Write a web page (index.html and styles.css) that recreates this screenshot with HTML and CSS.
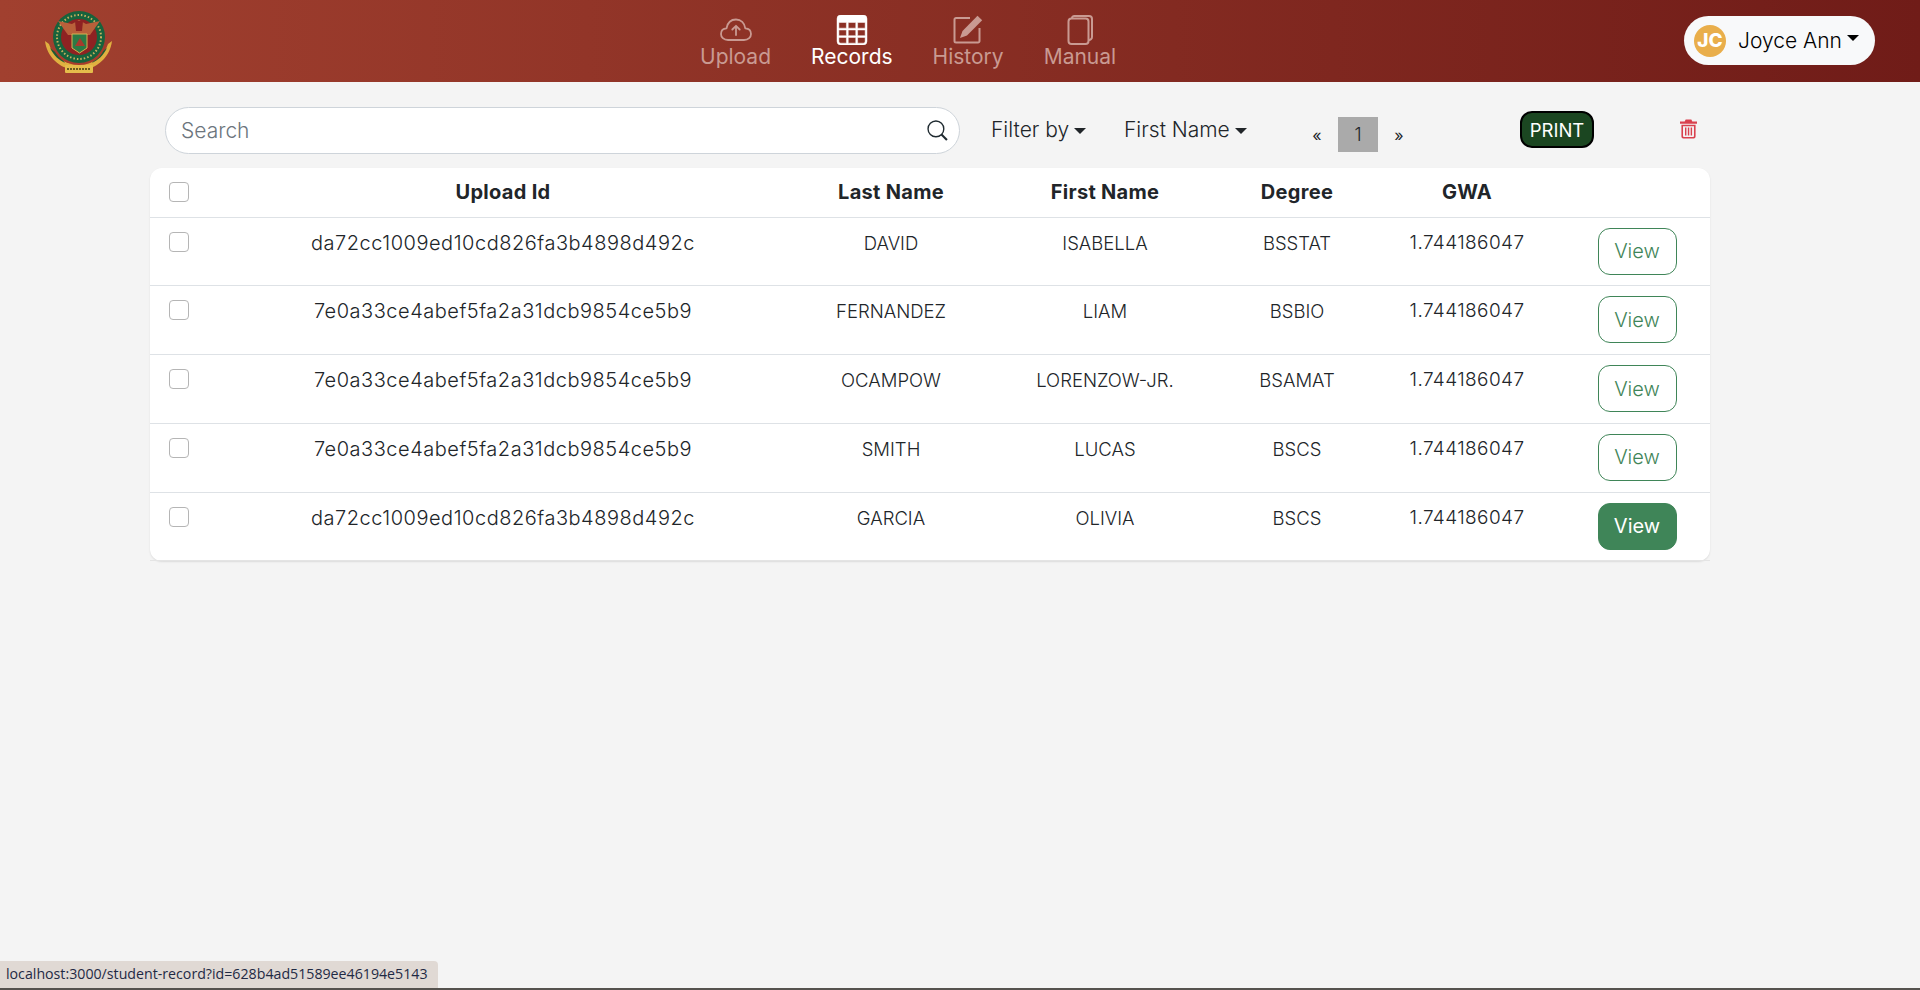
FILE: index.html
```html
<!DOCTYPE html>
<html lang="en">
<head>
  <meta charset="UTF-8" />
  <meta name="viewport" content="width=device-width, initial-scale=1.0" />
  <title>Records</title>
  <link rel="stylesheet" href="styles.css">
</head>
<body>
  <header class="topbar">
    <svg class="crest" viewBox="0 0 67 62">
      <path d="M0 30 C2 46 14 55 22 57 L45 57 C53 55 65 46 67 30 L63 33 C60 43 52 49 44 52 L23 52 C15 49 7 43 4 33 Z" fill="#e0b040"/>
      <path d="M5 37 C9 45 14 49 20 52 L14 44 Z M62 37 C58 45 53 49 47 52 L53 44 Z" fill="#1f5a34"/>
      <path d="M8 34 C10 46 20 54 34 54 C48 54 58 46 60 34 Z" fill="#a63c2c"/>
      <circle cx="34" cy="26" r="26" fill="#17633c"/>
      <circle cx="34" cy="26" r="22" fill="none" stroke="#c8b060" stroke-width="2" stroke-dasharray="1.500 2"/>
      <circle cx="34" cy="26" r="18" fill="#8e2222"/>
      <path d="M13 10 L27 13 L34 9 L41 13 L55 10 L45 24 L23 24 Z" fill="#b9603a"/>
      <path d="M30 10 H38 L37 20 H31 Z" fill="#8e2222"/>
      <path d="M27 23 H42 V37 L34.500 42 L27 37 Z" fill="#2c7a45" stroke="#d8b050"/>
      <path d="M30 35 L35 27 L40 35 Z" fill="#a83a2c"/>
      <rect x="20" y="54" width="28" height="8" rx="1" fill="#e5bc4b"/>
      <path d="M22 58 H46" stroke="#6b5a20" stroke-width="2" stroke-dasharray="2 1"/>
    </svg>
    <nav class="nav">
      <a class="nav-item">
        <svg viewBox="0 0 32 24" fill="none" stroke="currentColor" stroke-width="1.800" stroke-linecap="round" stroke-linejoin="round"><path d="M8 22 C3.500 22 1 19 1 16 C1 12.500 3.500 10.500 6.500 10.300 C7.500 5 11 1.500 16 1.500 C21 1.500 24.500 5 25.300 10.300 C28.500 10.500 31 12.500 31 16 C31 19 28.500 22 24 22 Z"/><path d="M16 17 V8 M12.300 11.500 L16 7.800 L19.700 11.500"/></svg>
        <span>Upload</span>
      </a>
      <a class="nav-item active">
        <svg viewBox="0 0 16 16" fill="currentColor" stroke="currentColor" stroke-width="0.250"><path d="M0 2a2 2 0 0 1 2-2h12a2 2 0 0 1 2 2v12a2 2 0 0 1-2 2H2a2 2 0 0 1-2-2V2zm15 2h-4v3h4V4zm0 4h-4v3h4V8zm0 4h-4v3h3a1 1 0 0 0 1-1v-2zm-5 3v-3H6v3h4zm-5 0v-3H1v2a1 1 0 0 0 1 1h3zm-4-4h4V8H1v3zm0-4h4V4H1v3zm5-3v3h4V4H6zm4 4H6v3h4V8z"/></svg>
        <span>Records</span>
      </a>
      <a class="nav-item">
        <svg viewBox="0 0 30 30" fill="none" stroke="currentColor" stroke-width="2"><path d="M17 3 H3 A1.500 1.500 0 0 0 1.500 4.500 V26 A1.500 1.500 0 0 0 3 27.500 H25 A1.500 1.500 0 0 0 26.500 26 V13"/><path d="M24.500 0.800 L29.200 5.200 L14 20.500 L7 23 L9.500 16 Z" fill="currentColor" stroke="none"/></svg>
        <span>History</span>
      </a>
      <a class="nav-item">
        <svg viewBox="0 0 26 30" fill="none" stroke="currentColor" stroke-width="2"><rect x="1.500" y="3.500" width="20" height="25.500" rx="3"/><path d="M5 3.500 V3 A2.500 2.500 0 0 1 7.500 1 H22 A3 3 0 0 1 25 4 V22 A3 3 0 0 1 21.500 25"/></svg>
        <span>Manual</span>
      </a>
    </nav>
    <div class="user-pill">
      <span class="avatar">JC</span>
      <span class="user-name">Joyce Ann</span>
      <span class="caret"></span>
    </div>
  </header>

  <main class="content">
    <div class="toolbar">
      <div class="search">
        <input type="text" placeholder="Search" />
        <svg viewBox="0 0 20 20" fill="none" stroke="#1f2a30" stroke-width="1.300"><circle cx="8.500" cy="8.500" r="7.500"/><path d="M13.800 13.800 L19 19" stroke-width="2"/></svg>
      </div>
      <div class="filter filter-by">Filter by<span class="caret"></span></div>
      <div class="filter filter-field">First Name<span class="caret"></span></div>
      <div class="pager">
        <span class="pager-arrow">«</span>
        <span class="pager-page">1</span>
        <span class="pager-arrow">»</span>
      </div>
      <button class="print-btn">PRINT</button>
      <svg class="trash" viewBox="0 0 18 20" fill="#d9414e"><path d="M6 0 H12 L13 2 H18 V4.500 H0 V2 H5 Z"/><path d="M1.500 5.500 H16.500 V18 A2 2 0 0 1 14.500 20 H3.500 A2 2 0 0 1 1.500 18 Z M3.200 7 V17.500 A1 1 0 0 0 4.200 18.500 H13.800 A1 1 0 0 0 14.800 17.500 V7 Z M5.300 8.500 H6.800 V17 H5.300 Z M8.300 8.500 H9.800 V17 H8.300 Z M11.300 8.500 H12.800 V17 H11.300 Z" fill-rule="evenodd"/></svg>
    </div>

    <table class="records">
      <colgroup>
        <col class="col-check"><col class="col-id"><col class="col-last"><col class="col-first"><col class="col-degree"><col class="col-gwa"><col class="col-action">
      </colgroup>
      <thead>
        <tr>
          <th><span class="check"></span></th>
          <th>Upload Id</th>
          <th>Last Name</th>
          <th>First Name</th>
          <th>Degree</th>
          <th>GWA</th>
          <th></th>
        </tr>
      </thead>
      <tbody>
        <tr>
          <td><span class="check"></span></td>
          <td class="cell-id">da72cc1009ed10cd826fa3b4898d492c</td>
          <td>DAVID</td>
          <td>ISABELLA</td>
          <td>BSSTAT</td>
          <td class="cell-gwa">1.744186047</td>
          <td><button class="view-btn">View</button></td>
        </tr>
        <tr>
          <td><span class="check"></span></td>
          <td class="cell-id">7e0a33ce4abef5fa2a31dcb9854ce5b9</td>
          <td>FERNANDEZ</td>
          <td>LIAM</td>
          <td>BSBIO</td>
          <td class="cell-gwa">1.744186047</td>
          <td><button class="view-btn">View</button></td>
        </tr>
        <tr>
          <td><span class="check"></span></td>
          <td class="cell-id">7e0a33ce4abef5fa2a31dcb9854ce5b9</td>
          <td>OCAMPOW</td>
          <td>LORENZOW-JR.</td>
          <td>BSAMAT</td>
          <td class="cell-gwa">1.744186047</td>
          <td><button class="view-btn">View</button></td>
        </tr>
        <tr>
          <td><span class="check"></span></td>
          <td class="cell-id">7e0a33ce4abef5fa2a31dcb9854ce5b9</td>
          <td>SMITH</td>
          <td>LUCAS</td>
          <td>BSCS</td>
          <td class="cell-gwa">1.744186047</td>
          <td><button class="view-btn">View</button></td>
        </tr>
        <tr>
          <td><span class="check"></span></td>
          <td class="cell-id">da72cc1009ed10cd826fa3b4898d492c</td>
          <td>GARCIA</td>
          <td>OLIVIA</td>
          <td>BSCS</td>
          <td class="cell-gwa">1.744186047</td>
          <td><button class="view-btn hover">View</button></td>
        </tr>
      </tbody>
    </table>
  </main>

  <div class="status-link">localhost:3000/student-record?id=628b4ad51589ee46194e5143</div>
  <div class="bottom-line"></div>
</body>
</html>
```

FILE: styles.css
```css
* {
  box-sizing: border-box;
}
html, body {
  height: 100%;
}
body {
  margin: 0;
  background: #f4f4f4;
  color: #212529;
  font-family: Inter, "Liberation Sans", sans-serif;
  overflow: hidden;
}
.topbar {
  height: 82px;
  display: flex;
  align-items: center;
  background: linear-gradient(90deg, #a1402f 0%, #701c18 100%);
}
.crest {
  width: 67px;
  height: 62px;
  margin-left: 45px;
  margin-top: 2px;
  flex: none;
}
.nav {
  display: flex;
  gap: 40px;
  margin-left: 588px;
}
.nav-item {
  height: 82px;
  display: flex;
  flex-direction: column;
  align-items: center;
  padding-top: 15px;
  color: #c99a92;
  font-size: 21px;
  line-height: 23px;
}
.nav-item svg {
  height: 30px;
  width: 32px;
}
.nav-item.active {
  color: #fff;
}
.user-pill {
  margin-left: auto;
  margin-right: 45px;
  margin-bottom: 1px;
  width: 191px;
  height: 49px;
  border-radius: 25px;
  background: #f8f9fa;
  display: flex;
  align-items: center;
  padding-left: 10px;
  color: #000;
}
.avatar {
  width: 32px;
  height: 32px;
  border-radius: 50%;
  background: #e9ae4b;
  color: #fff;
  font-size: 19px;
  font-weight: 800;
  text-align: center;
  line-height: 32px;
}
.user-name {
  margin-left: 12px;
  font-size: 21px;
  font-weight: 300;
}
.caret {
  display: inline-block;
  margin-left: 5px;
  border-top: 6px solid currentColor;
  border-left: 6px solid transparent;
  border-right: 6px solid transparent;
  vertical-align: 3px;
}
.user-pill .caret {
  margin-bottom: 5px;
}
.content {
  width: 1560px;
  margin-left: 150px;
}
.toolbar {
  display: flex;
  align-items: flex-start;
  height: 85.500px;
  padding: 25px 0 0 15px;
}
.search {
  position: relative;
  width: 795px;
  height: 47px;
}
.search input {
  width: 100%;
  height: 100%;
  border: 1px solid #ced4da;
  border-radius: 24px;
  padding: 0 50px 0 15px;
  font: 300 21px Inter, sans-serif;
  background: #fff;
}
.search input::placeholder {
  color: #6c757d;
}
.search svg {
  position: absolute;
  right: 12px;
  top: 13px;
  width: 21px;
  height: 21px;
}
.filter {
  height: 48px;
  line-height: 46px;
  font-size: 21px;
  font-weight: 300;
  color: #212529;
  white-space: nowrap;
}
.filter-by {
  margin-left: 31px;
  width: 133px;
}
.filter-field {
  width: 182px;
}
.pager {
  display: flex;
  align-items: center;
  height: 35px;
  margin-top: 10px;
  color: #212529;
}
.pager-arrow {
  width: 22px;
  text-align: center;
  font-size: 16px;
}
.pager-page {
  width: 40px;
  height: 35px;
  margin: 0 10px;
  background: #aaa;
  text-align: center;
  line-height: 35px;
  font-size: 18px;
  font-weight: 300;
}
.print-btn {
  margin-left: 110px;
  margin-top: 4px;
  width: 74px;
  height: 37px;
  background: #1b4621;
  color: #fff;
  border: 2px solid #000;
  border-radius: 12px;
  font: 400 18.500px Inter, sans-serif;
  padding: 0;
}
.trash {
  width: 17px;
  height: 20px;
  margin-left: 86px;
  margin-top: 12px;
}
.records {
  width: 1560px;
  table-layout: fixed;
  border-collapse: separate;
  border-spacing: 0;
  background: #fff;
  border-radius: 12px;
  box-shadow: 0 1px 2px rgba(0, 0, 0, 0.1);
  font-size: 18.500px;
  font-weight: 300;
  color: #212529;
}
.col-check { width: 58px; }
.col-id { width: 590px; }
.col-last { width: 186px; }
.col-first { width: 242px; }
.col-degree { width: 142px; }
.col-gwa { width: 198px; }
.col-action { width: 144px; }
.records th {
  height: 50px;
  font-size: 20px;
  letter-spacing: 0.300px;
  font-weight: 700;
  text-align: center;
  border-bottom: 1px solid #dee2e6;
  padding: 0;
}
.records td {
  height: 68.800px;
  text-align: center;
  vertical-align: top;
  padding: 13px 0 0;
  line-height: 24px;
  border-bottom: 1px solid #dee2e6;
}
.records .cell-id {
  font-size: 20px;
  letter-spacing: 0.520px;
}
.records .cell-gwa {
  font-size: 19px;
  letter-spacing: 0.400px;
}
.records tr:last-child td {
  border-bottom: 1px solid #e4e4e4;
}
.check {
  display: inline-block;
  width: 20px;
  height: 20px;
  border: 1px solid #b5b5b5;
  border-radius: 4px;
  background: #fff;
  vertical-align: top;
}
.records th .check {
  vertical-align: middle;
  margin-bottom: 2px;
}
.records td:first-child {
  padding-top: 14px;
}
.records td:last-child {
  padding: 10px 2px 0 0;
}
.view-btn {
  width: 79px;
  height: 47px;
  background: #fff;
  border: 1px solid #3f8558;
  border-radius: 12px;
  color: #3f8558;
  font: 300 20px Inter, sans-serif;
  padding: 0;
}
.view-btn.hover {
  background: #3f8558;
  color: #fff;
  font-weight: 400;
}
.status-link {
  position: fixed;
  left: 0;
  bottom: 2px;
  width: 438px;
  height: 27px;
  background: #e0d9d4;
  border-top-right-radius: 4px;
  padding: 3px 0 0 6px;
  font: 14.200px "Open Sans", sans-serif;
  color: #1f2a44;
  white-space: nowrap;
}
.bottom-line {
  position: fixed;
  left: 0;
  right: 0;
  bottom: 0;
  height: 2px;
  background: #55524e;
}
```
